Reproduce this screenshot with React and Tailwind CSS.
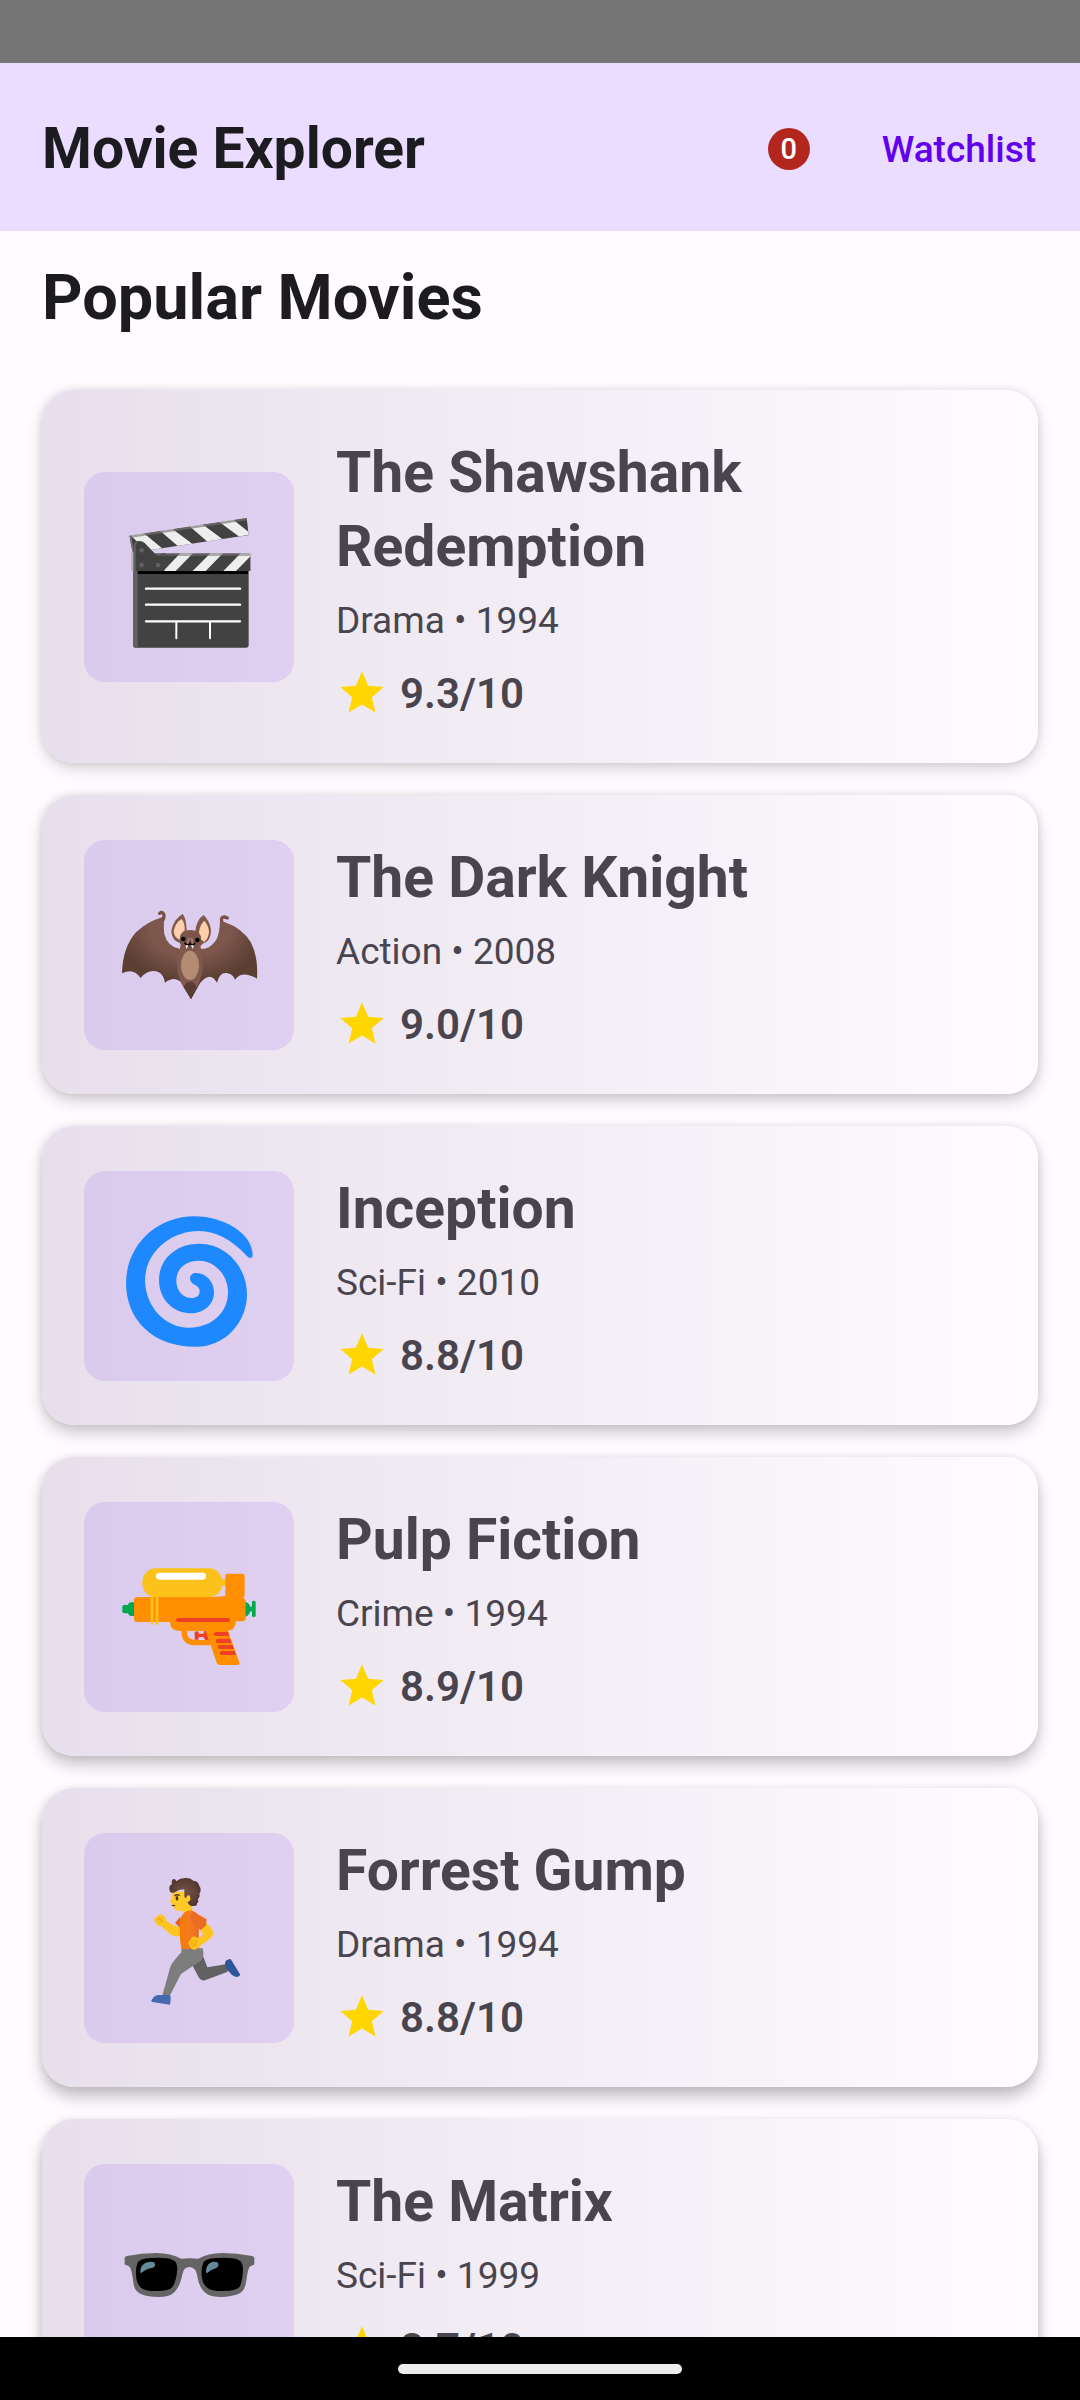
import React from "react";

function Clapper() {
  return (
    <svg viewBox="-78 -84 630 630" className="size-full" aria-hidden="true">
      <defs>
        <clipPath id="clap-top">
          <path d="M58 107L410 54L416 105L68 158Z" />
        </clipPath>
        <clipPath id="clap-low">
          <path d="M70 160H422V213H70Z" />
        </clipPath>
      </defs>
      <rect x="69" y="205" width="347" height="238" rx="8" fill="#424242" />
      <path d="M69 213H83V443H77Q69 443 69 435Z" fill="#616161" />
      <rect x="83" y="213" width="331" height="9" fill="#000" />
      <g clipPath="url(#clap-top)">
        <path d="M50 50H430V170H50Z" fill="#424242" />
        <path d="M62 106L100 98L158 146L112 156ZM150 92L186 86L248 132L206 140ZM238 78L276 72L338 118L296 128ZM328 66L368 58L424 102L388 110Z" fill="#eee" />
        <path d="M58 107L410 54L411 61L59 114Z" fill="#757575" opacity=".65" />
        <path d="M58 107L63 107L72 158H64Z" fill="#757575" />
      </g>
      <g clipPath="url(#clap-low)">
        <path d="M70 160H422V213H70Z" fill="#424242" />
        <path d="M211 160H249L197 213H159ZM301 160H339L287 213H248ZM392 160H430L378 213H340Z" fill="#eee" />
        <path d="M70 160H422V168H70Z" fill="#757575" opacity=".55" />
      </g>
      <path d="M64 155H74V213H64Z" fill="#b0b5ae" />
      <path d="M71 140Q71 124 86 123Q97 122 104 129L163 190V213H71Z" fill="#424242" />
      <path d="M100 126L146 172L153 164H172L120 213H160L190 180L163 160L153 162L146 172Z" fill="#424242" />
      <path d="M71 140V213H77V140Q77 129 86 124Q71 124 71 140Z" fill="#616161" />
      <g fill="#616161">
        <circle cx="95" cy="151" r="7" />
        <circle cx="95" cy="195" r="7" />
        <circle cx="144" cy="195" r="7" />
      </g>
      <g stroke="#fff" strokeWidth="7" strokeLinecap="round">
        <path d="M108 266H390M108 314H390M108 364H390" />
        <path d="M199 366V415M300 366V415" strokeWidth="6" />
      </g>
    </svg>
  );
}

function Bat() {
  return (
    <svg viewBox="12 30 630 630" className="size-full" aria-hidden="true">
      <defs>
        <radialGradient id="bat-wing" gradientUnits="userSpaceOnUse" cx="330" cy="290" r="220" gradientTransform="translate(330 290) scale(1 .75) translate(-330 -290)">
          <stop offset=".55" stopColor="#7d564c" />
          <stop offset="1" stopColor="#5b3f33" />
        </radialGradient>
      </defs>
      <path d="M246 262Q200 276 168 307Q128 352 126 430Q161 412 182 444Q205 416 235 426Q250 432 255 458Q281 437 302 455L333 508L361 458Q391 422 411 458Q418 427 440 429Q458 431 465 449Q486 419 531 446Q535 380 512 336Q486 294 433 276L420 272Q419 310 409 329Q390 358 362 357H300Q262 350 253 312Q250 292 253 262Z" fill="url(#bat-wing)" />
      <path d="M250 268Q256 249 244 247L239 250M425 274Q422 260 434 261L442 264" fill="none" stroke="#795046" strokeWidth="10" strokeLinecap="round" />
      <path d="M302 345Q286 400 294 430Q297 449 312 473H351Q369 434 369 405Q370 371 360 345Z" fill="#80594e" />
      <path d="M333 508L311 472Q318 454 330 455Q340 453 351 472Z" fill="#5a3d32" />
      <ellipse cx="330" cy="406" rx="27" ry="44" fill="#b48c74" />
      <path d="M308 252Q319 263 320 303H346Q350 268 371 255Q390 274 393 301Q393 334 370 340Q349 364 325 359Q307 357 299 339Q275 331 274 304Q278 270 308 252Z" fill="#80594e" />
      <path d="M305 267Q315 278 314 301L301 330Q282 323 281 304Q286 277 305 267ZM373 272Q386 286 387 306Q385 328 372 336L357 322Q355 288 373 272Z" fill="#ffceaa" />
      <path d="M300 318Q305 300 331 300Q357 301 363 320Q363 340 350 353Q330 366 310 352Q297 337 300 318Z" fill="#7b554a" />
      <path d="M326 326L323 338M335 326L338 338" stroke="#ad8472" strokeWidth="5" strokeLinecap="round" />
      <circle cx="310" cy="327" r="7" fill="#000" />
      <circle cx="352" cy="330" r="7" fill="#000" />
      <path d="M315 339Q317 346 324 345Q329 344 330 341Q332 345 338 345Q343 345 344 340" fill="none" stroke="#000" strokeWidth="5" strokeLinecap="round" />
      <path d="M316 346H325L320 357ZM333 346H342L338 357Z" fill="#fff" />
    </svg>
  );
}

function Cyclone() {
  return (
    <svg viewBox="12 33 630 630" className="size-full" aria-hidden="true">
      <path
        fill="#1e88ff"
        d="M518 285Q518 294 511 294Q506 294 500 287C455 240 410 213 357 213C268 213 195 280 195 362C197 440 255 503 327 503C393 503 444 460 444 396C444 347 406 302 356 302C317 302 289 326 289 362C289 391 308 414 335 414C350 414 359 407 359 393C359 384 353 378 344 374C335 370 330 364 330 355C330 345 338 339 349 339C378 339 402 366 402 396C402 435 371 460 331 460C279 460 237 417 237 361C237 298 287 251 357 251C440 251 501 322 501 404C500 488 434 560 350 560C222 562 138 482 138 368C140 256 228 169 344 169C430 169 518 221 518 285Z"
      />
    </svg>
  );
}

function WaterGun() {
  return (
    <svg viewBox="12 36 630 630" className="size-full" aria-hidden="true">
      <rect x="420" y="268" width="20" height="20" fill="#fcc21b" />
      <rect x="187" y="235" width="240" height="87" rx="41" fill="#fcc21b" />
      <rect x="228" y="248" width="150" height="21" rx="10" fill="#fff" />
      <path d="M127 350Q127 345 132 345H144Q145 338 152 337H164V378H152Q146 377 144 370H132Q127 370 127 364ZM494 335Q506 337 511 350H516V336Q516 332 521 332Q527 332 527 336V377Q527 381 521 381Q516 381 516 377V364H511Q506 379 494 381Z" fill="#00a84e" />
      <path d="M436 257Q436 251 443 251H487Q494 251 494 257V315Q493 321 490 323Q497 327 497 336V385Q497 393 489 394H468Q467 423 438 423H299Q270 422 270 396H172Q162 396 162 386V332Q162 321 172 321H400L436 318Z" fill="#ff8f00" />
      <path d="M212 320V402Q216 407 220 402V320ZM227 320V402Q231 407 235 402V320Z" fill="#fcc21b" />
      <rect x="288" y="384" width="162" height="12" rx="6" fill="#ef4023" />
      <path d="M344 427Q350 420 356 427V431H370L373 422H380L387 449Q380 453 375 449L370 441H356V448Q350 452 344 448Z" fill="#ef4023" />
      <path d="M313 418V432Q315 458 350 458H400" fill="none" stroke="#ff8f00" strokeWidth="16" />
      <path d="M376 420H443L478 517Q479 525 470 525H419Q413 525 410 518Z" fill="#ff8f00" />
      <path d="M444 426L448 438H407Q401 437 401 432Q401 427 407 426ZM450 446L455 459H413Q407 458 407 452Q407 447 413 446ZM458 465L462 477H419Q413 476 413 471Q413 466 419 465ZM464 483L468 495H425Q419 494 419 489Q419 484 425 483Z" fill="#ef4023" />
    </svg>
  );
}

function Runner() {
  return (
    <svg viewBox="12 39 630 630" className="size-full" aria-hidden="true">
      <defs>
        <linearGradient id="runner-shirt" x1="0" x2="1">
          <stop offset="0" stopColor="#f57c00" />
          <stop offset=".5" stopColor="#f47b20" />
          <stop offset="1" stopColor="#ed6c1f" />
        </linearGradient>
        <radialGradient id="runner-hair">
          <stop offset=".3" stopColor="#6d4c41" />
          <stop offset="1" stopColor="#543930" />
        </radialGradient>
      </defs>
      <path d="M366 400L382 442L437 433L443 455L375 481Q364 483 357 473L335 432Z" fill="#616161" />
      <path d="M435 431Q435 418 452 417L480 463Q481 469 470 471Q458 469 448 456Q433 446 435 431Z" fill="#2f5599" />
      <path d="M305 385H368Q374 409 364 421L303 462L270 526H247L271 440Q279 424 304 397Z" fill="#7d7d7d" />
      <path d="M217 537Q224 524 240 525H270Q274 532 270 554L217 546Q211 544 217 537Z" fill="#4568ae" />
      <path d="M291 317Q300 314 297 348Q289 352 273 344L243 318Q233 320 231 314L222 301Q222 293 230 291Q235 281 245 284Q257 289 259 302Q274 314 291 320Z" fill="#ffc41f" />
      <path d="M231 300L240 295L247 303M239 308L248 302" fill="none" stroke="#e59a0d" strokeWidth="3" />
      <path d="M285 309L300 291V322Z" fill="#e65f22" />
      <path d="M277 215H325L337 252V276Q320 287 307 273Q285 274 279 260L275 248L269 247L276 230Z" fill="#ffca28" />
      <path d="M300 296Q313 271 333 271Q350 275 357 291L356 387H304Q296 340 300 296Z" fill="url(#runner-shirt)" />
      <path d="M361 331L377 307Q400 327 400 342Q397 353 385 360L348 388Q336 392 330 381L325 369Q325 363 331 361Q335 348 345 350L357 355L369 343Z" fill="#ffc41f" />
      <path d="M331 362Q329 373 336 382L347 380Q355 369 349 358Z" fill="#f7b414" />
      <path d="M331 292Q331 276 342 276L380 298L377 318L362 330Q337 315 331 292Z" fill="#eb6d24" />
      <path d="M268 206Q267 197 276 192Q273 179 281 177Q289 178 288 184Q302 173 318 174Q332 173 340 182Q356 183 358 198Q366 209 358 222Q362 229 353 238Q358 246 351 250Q352 258 343 258Q329 260 323 248V241Q334 231 328 226Q321 223 318 235L313 231V208Q297 208 282 218Q269 221 268 206Z" fill="url(#runner-hair)" />
      <path d="M321 229Q331 224 331 238Q328 248 321 246Z" fill="#ffca28" />
      <ellipse cx="291" cy="235" rx="4" ry="7" fill="#49372b" />
      <path d="M284 227Q290 222 298 226" fill="none" stroke="#543930" strokeWidth="4" strokeLinecap="round" />
      <path d="M277 256L284 257" stroke="#6d3b1a" strokeWidth="4" strokeLinecap="round" />
    </svg>
  );
}

function Sunglasses() {
  return (
    <svg viewBox="12 30 630 630" className="size-full" aria-hidden="true">
      <path d="M134 312Q134 307 141 306Q185 297 229 297Q274 298 303 314Q329 311 355 314Q384 298 426 297Q470 297 516 306Q523 307 523 312V329Q523 333 518 334Q506 336 503 355L498 385Q494 413 473 421Q454 428 424 429Q391 429 376 416Q358 402 353 372Q349 350 344 346Q328 332 313 346Q309 351 304 374Q297 402 281 416Q267 429 235 429Q204 429 185 421Q164 413 161 390L155 355Q152 336 140 334Q134 333 134 329Z" fill="#646464" />
      <path d="M171 332Q174 312 213 312Q258 309 277 317Q292 322 292 344Q289 381 278 398Q267 411 232 411Q195 412 183 401Q169 389 168 362Q167 342 171 332Z" fill="#000" />
      <path d="M368 332Q371 312 410 312Q455 309 474 317Q489 322 489 344Q488 381 479 398Q468 411 430 411Q394 412 382 401Q366 389 365 362Q364 342 368 332Z" fill="#000" />
      <path d="M181 354Q181 334 196 327Q211 321 222 325Q228 331 223 339Q218 343 205 344Q195 347 187 355Q182 359 181 354ZM378 354Q378 334 390 327Q402 321 412 325Q418 331 413 339Q409 343 399 346Q391 349 385 355Q379 359 378 354Z" fill="#648998" />
    </svg>
  );
}

function Star() {
  return (
    <svg viewBox="0 0 24 24" className="size-[52px] shrink-0" aria-hidden="true">
      <path fill="#ffd600" d="M12 17.27L18.18 21l-1.64-7.03L22 9.24l-7.19-.61L12 2 9.19 8.63 2 9.24l5.46 4.73L5.82 21z" />
    </svg>
  );
}

const movies = [
  { title: "The Shawshank Redemption", genre: "Drama", year: 1994, rating: "9.3", Poster: Clapper, shadow: "shadow-[0_0_8px_rgba(0,0,0,0.10),0_6px_16px_rgba(0,0,0,0.15)]" },
  { title: "The Dark Knight", genre: "Action", year: 2008, rating: "9.0", Poster: Bat, shadow: "shadow-[0_0_8px_rgba(0,0,0,0.10),0_7px_16px_rgba(0,0,0,0.18)]" },
  { title: "Inception", genre: "Sci-Fi", year: 2010, rating: "8.8", Poster: Cyclone, shadow: "shadow-[0_0_8px_rgba(0,0,0,0.09),0_8px_16px_rgba(0,0,0,0.20)]" },
  { title: "Pulp Fiction", genre: "Crime", year: 1994, rating: "8.9", Poster: WaterGun, shadow: "shadow-[0_0_8px_rgba(0,0,0,0.09),0_9px_16px_rgba(0,0,0,0.22)]" },
  { title: "Forrest Gump", genre: "Drama", year: 1994, rating: "8.8", Poster: Runner, shadow: "shadow-[0_0_8px_rgba(0,0,0,0.08),0_10px_16px_rgba(0,0,0,0.24)]" },
  { title: "The Matrix", genre: "Sci-Fi", year: 1999, rating: "8.7", Poster: Sunglasses, shadow: "shadow-[0_0_8px_rgba(0,0,0,0.08),0_11px_16px_rgba(0,0,0,0.25)]" },
];

function MovieCard({ title, genre, year, rating, Poster, shadow }) {
  return (
    <li className={"flex items-center gap-[42px] rounded-[32px] bg-linear-to-r from-[#e7e0ec] to-[#fffbff] p-[42px] text-[#49454f] " + shadow}>
      <div className="size-[210px] shrink-0 overflow-hidden rounded-[21px] bg-[#6200ee]/10">
        <Poster />
      </div>
      <div className="min-w-0 flex-1 pt-1">
        <h3 className="max-w-[500px] text-[57px] leading-[74px] font-bold">{title}</h3>
        <p className="mt-[10px] text-[37px] leading-[53px]">
          {genre} • {year}
        </p>
        <div className="mt-5 flex items-start gap-3">
          <Star />
          <span className="text-[42px] leading-[54px] font-semibold">{rating}/10</span>
        </div>
      </div>
    </li>
  );
}

export default function App() {
  return (
    <div className="flex h-screen flex-col bg-[#fffbff] text-[#1c1b1f] [font-family:Roboto,sans-serif]">
      <div className="h-[63px] shrink-0 bg-[#757575]" />
      <header className="flex h-[168px] shrink-0 items-center bg-[#eaddff] pt-1 pr-11 pl-[42px]">
        <h1 className="flex-1 text-[57px] leading-[74px] font-bold">Movie Explorer</h1>
        <span className="flex size-[42px] items-center justify-center rounded-full bg-[#b3261e] text-[29px] leading-[42px] font-medium text-white">0</span>
        <button type="button" className="ml-[72px] text-[37px] leading-[53px] font-medium text-[#6200ee]">
          Watchlist
        </button>
      </header>
      <main className="min-h-0 flex-1 overflow-hidden px-[42px] pt-[25px]">
        <h2 className="text-[63px] leading-[84px] font-bold">Popular Movies</h2>
        <ul className="mt-[50px] flex flex-col gap-8">
          {movies.map((m) => (
            <MovieCard key={m.title} {...m} />
          ))}
        </ul>
      </main>
      <nav className="flex h-[63px] shrink-0 items-center justify-center bg-black" aria-label="System navigation">
        <div className="h-[10px] w-[284px] rounded-full bg-[#ececec]" />
      </nav>
    </div>
  );
}
